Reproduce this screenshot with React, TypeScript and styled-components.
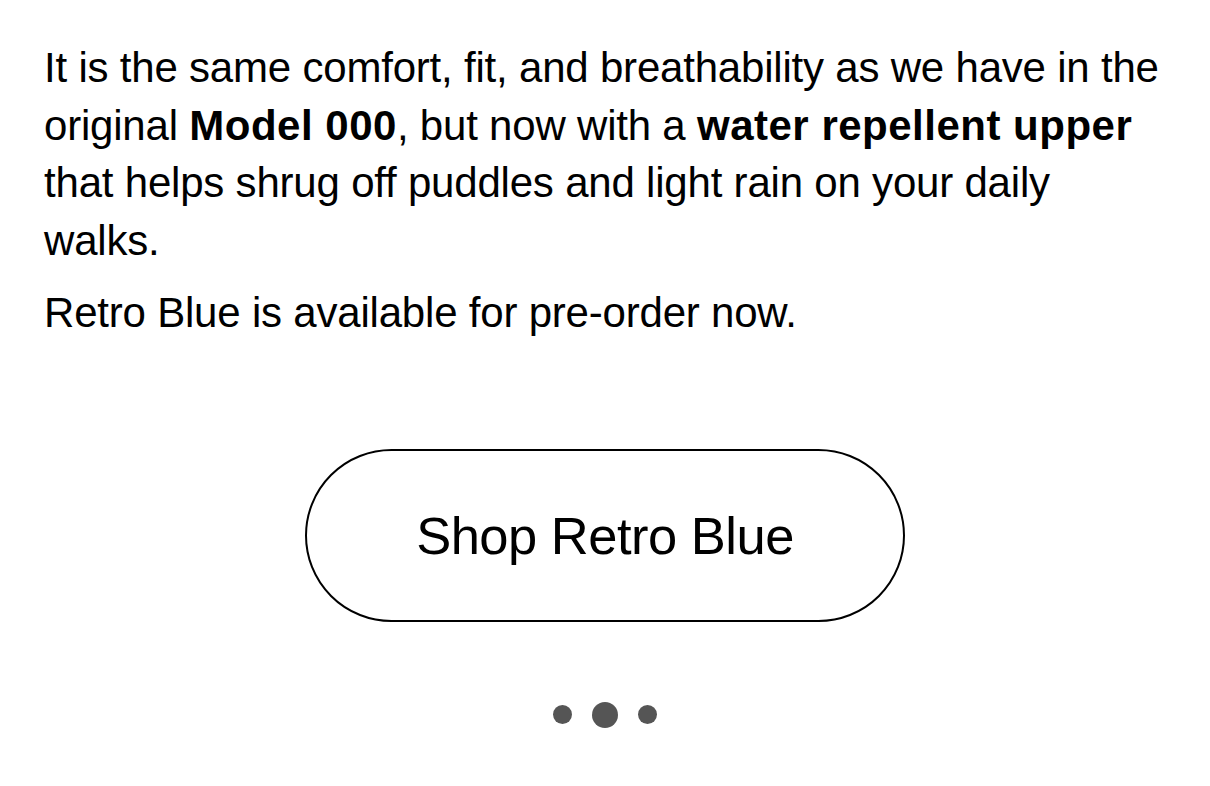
import React from "react";
import styled, { createGlobalStyle } from "styled-components";

const Global = createGlobalStyle`
  html, body { margin: 0; padding: 0; background: #fff; }
  body { font-family: "Liberation Sans", Arial, sans-serif; color: #000; }
`;

const Page = styled.main`
  padding: 39px 44px 0 44px;
  display: flex;
  flex-direction: column;
`;

const Copy = styled.p`
  margin: 0 0 15px 0;
  font-size: 42px;
  line-height: 57.6px;
  letter-spacing: -0.2px;
`;

const Em = styled.strong`
  font-weight: 700;
  letter-spacing: 0.5px;
`;

const CtaRow = styled.div`
  display: flex;
  justify-content: center;
  margin-top: 92px;
`;

const Cta = styled.a`
  box-sizing: border-box;
  width: 600px;
  height: 173px;
  border: 2.5px solid #000;
  border-radius: 999px;
  display: flex;
  align-items: center;
  justify-content: center;
  font-size: 52.5px;
  letter-spacing: -0.5px;
  color: #000;
  text-decoration: none;
`;

const Dots = styled.div`
  display: flex;
  justify-content: center;
  align-items: center;
  gap: 20px;
  margin-top: 80px;
`;

const Dot = styled.span<{ $active?: boolean }>`
  width: ${(p) => (p.$active ? 26 : 19)}px;
  height: ${(p) => (p.$active ? 26 : 19)}px;
  border-radius: 50%;
  background: #555;
`;

export default function App() {
  return (
    <>
      <Global />
      <Page>
        <Copy>
          It is the same comfort, fit, and breathability as we have in the original{" "}
          <Em>Model 000</Em>, but now with a <Em>water repellent upper</Em> that helps shrug off
          puddles and light rain on your daily walks.
        </Copy>
        <Copy>Retro Blue is available for pre-order now.</Copy>
        <CtaRow>
          <Cta href="#">Shop Retro Blue</Cta>
        </CtaRow>
        <Dots>
          <Dot />
          <Dot $active />
          <Dot />
        </Dots>
      </Page>
    </>
  );
}
